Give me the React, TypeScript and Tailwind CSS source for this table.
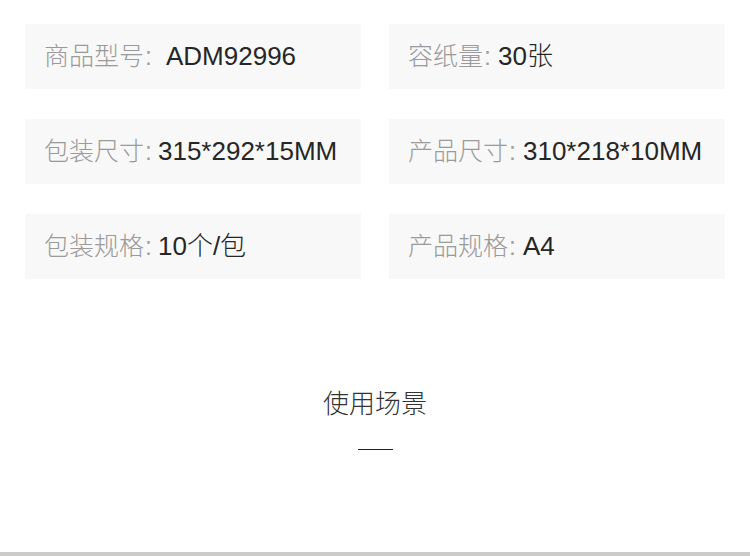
import React from "react";

const font = { fontFamily: '"Liberation Sans", "Noto Sans CJK SC", sans-serif' };

type Item = { label: string; value: string; gap: string };

function Spec({ item }: { item: Item }) {
  return (
    <div className="flex h-[65px] w-[336px] items-center bg-[#f8f8f8] pl-[19px]">
      <span className="text-[25px] font-light text-[#9a9a9a]">{item.label}</span>
      <span className="ml-[1px] text-[25px] text-[#a0a0a0]">:</span>
      <span className={`${item.gap} text-[26px] font-light text-[#262626]`}>{item.value}</span>
    </div>
  );
}

export default function App() {
  const rows: Item[][] = [
    [
      { label: "商品型号", value: "ADM92996", gap: "ml-[14px]" },
      { label: "容纸量", value: "30张", gap: "ml-[7px]" },
    ],
    [
      { label: "包装尺寸", value: "315*292*15MM", gap: "ml-[6px]" },
      { label: "产品尺寸", value: "310*218*10MM", gap: "ml-[7px]" },
    ],
    [
      { label: "包装规格", value: "10个/包", gap: "ml-[6px]" },
      { label: "产品规格", value: "A4", gap: "ml-[7px]" },
    ],
  ];
  return (
    <div className="relative h-[556px] w-[750px] overflow-hidden bg-white" style={font}>
      <div className="flex flex-col gap-[30px] pl-[25px] pt-[24px]">
        {rows.map((r, i) => (
          <div key={i} className="flex gap-[28px]">
            <Spec item={r[0]} />
            <Spec item={r[1]} />
          </div>
        ))}
      </div>
      <div className="mt-[107px] flex flex-col items-center">
        <div className="text-[26px] font-light leading-[36px] text-[#333333]">使用场景</div>
        <div className="mt-[27px] h-px w-[35px] bg-[#222222]" />
      </div>
      <div className="absolute bottom-0 left-0 h-[4px] w-full bg-[#cdcbc8]" />
    </div>
  );
}
